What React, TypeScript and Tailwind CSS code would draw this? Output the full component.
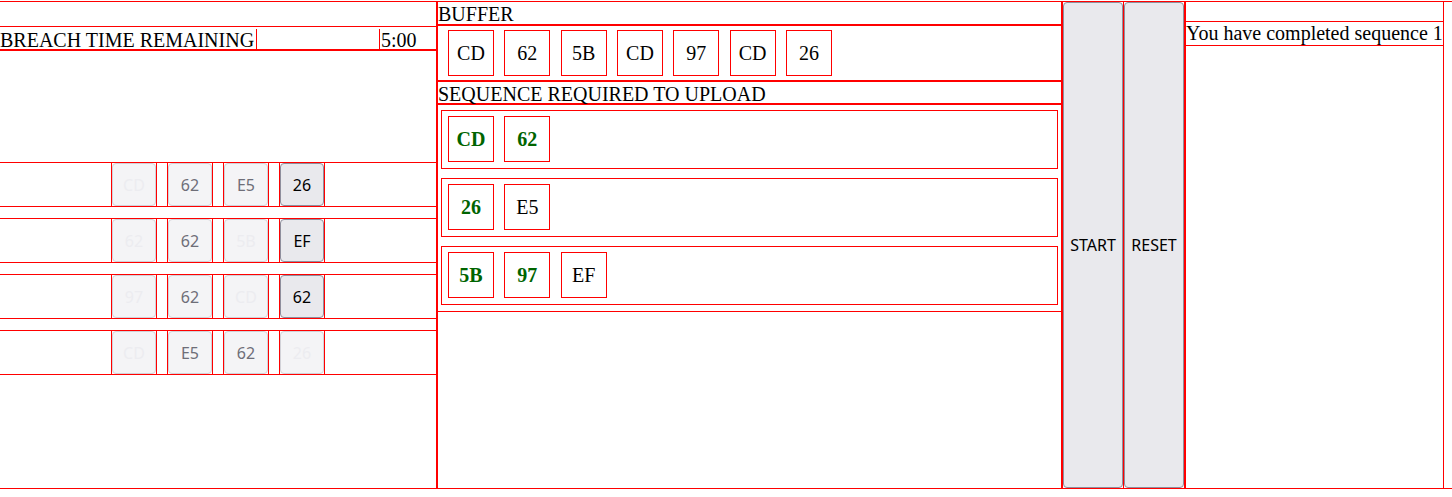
type CellState = 'on' | 'dim' | 'off';

const matrix: [string, CellState][][] = [
  [['CD', 'off'], ['62', 'dim'], ['E5', 'dim'], ['26', 'on']],
  [['62', 'off'], ['62', 'dim'], ['5B', 'off'], ['EF', 'on']],
  [['97', 'off'], ['62', 'dim'], ['CD', 'off'], ['62', 'on']],
  [['CD', 'off'], ['E5', 'dim'], ['62', 'dim'], ['26', 'off']],
];

const buffer = ['CD', '62', '5B', 'CD', '97', 'CD', '26'];

const sequences: { code: string; done: boolean }[][] = [
  [{ code: 'CD', done: true }, { code: '62', done: true }],
  [{ code: '26', done: true }, { code: 'E5', done: false }],
  [{ code: '5B', done: true }, { code: '97', done: true }, { code: 'EF', done: false }],
];

function MatrixCell({ code, state }: { code: string; state: CellState }) {
  const look =
    state === 'on'
      ? 'border-[#8f8f9d] bg-[#e9e9ed] text-black'
      : state === 'dim'
        ? 'border-[#d2d2d8] bg-[#f4f4f6] text-[#6e6e78]'
        : 'border-[#d2d2d8] bg-[#f4f4f6] text-[#ececf0]';
  return (
    <div className="flex h-full w-[46px] border-x border-[#f00]">
      <button
        disabled={state !== 'on'}
        className={`h-full w-full rounded-[4px] border font-['Noto_Sans',sans-serif] text-[16px] ${look}`}
      >
        {code}
      </button>
    </div>
  );
}

function CodeBox({ code, done }: { code: string; done?: boolean }) {
  return (
    <div
      className={`flex h-[46px] w-[46px] items-center justify-center border border-[#f00] ${
        done ? 'font-bold text-[#006400]' : ''
      }`}
    >
      {code}
    </div>
  );
}

export default function App() {
  return (
    <div className="font-['Liberation_Serif',serif] text-[20px] leading-[22px] text-black">
      <div className="mt-px flex h-[488px] border-y border-[#f00]">
        {/* matrix + timer */}
        <div className="flex w-[438px] flex-col border-r-2 border-[#f00]">
          <div className="h-[24px]" />
          <div className="flex h-[25px] border-t border-b-2 border-[#f00] pt-[2px]">
            <div className="w-[257px] whitespace-nowrap border-r border-[#f00]">BREACH TIME REMAINING</div>
            <div className="w-[123px] border-r border-[#f00]" />
            <div className="flex-1 pl-px">5:00</div>
          </div>
          <div className="mt-[111px] flex flex-col gap-[11px]">
            {matrix.map((row, i) => (
              <div key={i} className="flex h-[45px] justify-center gap-[10px] border-y border-[#f00]">
                {row.map(([code, state], j) => (
                  <MatrixCell key={j} code={code} state={state} />
                ))}
              </div>
            ))}
          </div>
        </div>

        {/* buffer + sequences */}
        <div className="flex w-[625px] flex-col border-r-2 border-[#f00]">
          <div className="h-[24px] border-b-2 border-[#f00] pt-px">BUFFER</div>
          <div className="flex h-[56px] gap-[10.33px] border-b-2 border-[#f00] px-[10px] pt-[4px]">
            {buffer.map((code, i) => (
              <CodeBox key={i} code={code} />
            ))}
          </div>
          <div className="h-[23px] border-b-2 border-[#f00] pt-px">SEQUENCE REQUIRED TO UPLOAD</div>
          <div className="flex h-[207px] flex-col gap-[9px] border-b border-[#f00] px-[3px] pt-[5px]">
            {sequences.map((seq, i) => (
              <div key={i} className="flex h-[59px] gap-[10.33px] border border-[#f00] px-[6px] pt-[5px]">
                {seq.map((s, j) => (
                  <CodeBox key={j} code={s.code} done={s.done} />
                ))}
              </div>
            ))}
          </div>
        </div>

        {/* controls */}
        <div className="w-[61px] border-r border-[#f00]">
          <button className="h-full w-full rounded-[4px] border border-[#8f8f9d] bg-[#e9e9ed] font-['Noto_Sans',sans-serif] text-[16px]">
            START
          </button>
        </div>
        <div className="w-[62px] border-r-2 border-[#f00]">
          <button className="h-full w-full rounded-[4px] border border-[#8f8f9d] bg-[#e9e9ed] font-['Noto_Sans',sans-serif] text-[16px]">
            RESET
          </button>
        </div>

        {/* log */}
        <div className="flex w-[258px] flex-col border-r border-[#f00]">
          <div className="h-[19px]" />
          <div className="h-[25px] whitespace-nowrap border-y border-[#f00] leading-[23px]">
            You have completed sequence 1
          </div>
        </div>

        <div className="flex-1" />
      </div>
    </div>
  );
}
